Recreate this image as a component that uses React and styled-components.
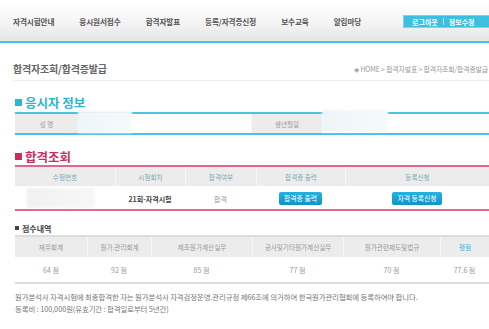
import React from "react"
import styled, { createGlobalStyle } from "styled-components"

const GlobalStyle = createGlobalStyle`
  html, body {
    margin: 0;
    padding: 0;
    background: #fff;
    overflow: hidden;
  }
  body {
    font-family: "Noto Sans CJK KR", "Noto Sans", sans-serif;
    color: #666;
  }
`

const Page = styled("div")`
  width: 489px;
  height: 329px;
  overflow: hidden;
`

const Header = styled("header")`
  display: flex;
  align-items: center;
  height: 41px;
  padding-left: 13px;
  background: linear-gradient(#ffffff 0%, #f7f7f7 45%, #e6e6e6 100%);
  border-bottom: 2px solid #3fc3e3;
`

const Nav = styled("nav")`
  display: flex;
  gap: 25px;
  padding-top: 2px;
`

const NavItem = styled("a")`
  font-size: 7.6px;
  font-weight: 700;
  color: #555;
  white-space: nowrap;
  letter-spacing: -0.1px;
`

const AccountBtn = styled("div")`
  display: flex;
  align-items: center;
  gap: 5px;
  margin-left: auto;
  margin-top: 2px;
  width: 86px;
  height: 13px;
  padding-left: 8px;
  box-sizing: border-box;
  background: #3dbfe0;
  border: 1px solid #7ad6ee;
  border-right: none;
  font-size: 7px;
  font-weight: 700;
  color: #fff;
  white-space: nowrap;
`

const Sep = styled("span")`
  width: 1px;
  height: 7px;
  background: #a8e4f3;
`

const Content = styled("main")`
  padding-left: 15px;
`

const TitleBar = styled("div")`
  display: flex;
  align-items: center;
  justify-content: space-between;
  margin-left: -2px;
  padding: 19px 1px 4px 0;
  border-bottom: 1px solid #eeeeee;
`

const PageTitle = styled("h2")`
  margin: 0;
  font-size: 10px;
  line-height: 14px;
  font-weight: 700;
  color: #666;
  letter-spacing: -0.2px;
`

const Crumbs = styled("div")`
  font-size: 6.9px;
  color: #999;
  letter-spacing: -0.15px;
`

const SectionTitle = styled("h3")`
  display: flex;
  align-items: center;
  gap: 3px;
  margin: ${(p) => p.$top}px 0 0;
  height: 16px;
  font-size: 12.5px;
  font-weight: 700;
  color: ${(p) => p.$color};
  &::before {
    content: "";
    width: 7px;
    height: 7px;
    background: ${(p) => p.$color};
  }
`

const SmallTitle = styled("h4")`
  display: flex;
  align-items: center;
  gap: 3px;
  margin: 12px 0 0;
  height: 10px;
  font-size: 8px;
  font-weight: 700;
  color: #444;
  &::before {
    content: "";
    width: 4px;
    height: 4px;
    background: #444;
  }
`

const Table = styled("div")`
  display: grid;
  grid-template-columns: ${(p) => p.$cols};
  margin-top: ${(p) => p.$top || 2}px;
  border-top: 2px solid ${(p) => p.$line};
  border-bottom: 2px solid ${(p) => p.$line};
`

const Head = styled("div")`
  display: flex;
  align-items: center;
  justify-content: center;
  height: ${(p) => p.$h || 19}px;
  background: #ececec;
  border-left: 1px solid #f6f6f6;
  margin-bottom: ${(p) => p.$gap || 0}px;
  font-size: 6.6px;
  color: ${(p) => (p.$accent ? "#37b4d6" : p.$tint ? "#7fa9b7" : "#999")};
  &:first-child {
    border-left: none;
  }
`

const Cell = styled("div")`
  display: flex;
  align-items: center;
  justify-content: center;
  height: ${(p) => p.$h || 21}px;
  font-size: 7px;
  color: ${(p) => (p.$dark ? "#444" : "#999")};
  font-weight: ${(p) => (p.$dark ? 700 : 400)};
`

const Redacted = styled("div")`
  width: ${(p) => p.$w}px;
  height: ${(p) => p.$h}px;
  margin-top: ${(p) => p.$mt || 0}px;
  margin-left: ${(p) => p.$ml || 0}px;
  background: ${(p) => p.$bg};
  filter: blur(1px);
`

const RedactedCell = styled("div")`
  display: flex;
  align-items: flex-start;
`

const ActionBtn = styled("button")`
  height: 13px;
  padding: 0 5px;
  border: none;
  border-radius: 2px;
  background: linear-gradient(#26b3e0, #0f93c9);
  color: #fff;
  font-family: inherit;
  font-size: 6.8px;
  line-height: 13px;
  white-space: nowrap;
`

const Note = styled("p")`
  margin: 7px 0 0;
  font-size: 7.4px;
  line-height: 12px;
  color: #777;
  letter-spacing: -0.1px;
  white-space: nowrap;
`

const menu = ["자격시험안내", "응시원서접수", "합격자발표", "등록/자격증신청", "보수교육", "알림마당"]

const scores = [
  { name: "재무회계", value: "64 점" },
  { name: "원가.관리회계", value: "92 점" },
  { name: "제조원가계산실무", value: "85 점" },
  { name: "공사및기타원가계산실무", value: "77 점" },
  { name: "원가관련제도및법규", value: "70 점" },
  { name: "평점", value: "77.6 점", accent: true },
]

const App = () => {
  return (
    <Page>
      <GlobalStyle />
      <Header>
        <Nav>
          {menu.map((m) => (
            <NavItem key={m}>{m}</NavItem>
          ))}
        </Nav>
        <AccountBtn>
          <span>로그아웃</span>
          <Sep />
          <span>정보수정</span>
        </AccountBtn>
      </Header>

      <Content>
        <TitleBar>
          <PageTitle>합격자조회/합격증발급</PageTitle>
          <Crumbs>◈ HOME &gt; 합격자발표 &gt; 합격자조회/합격증발급</Crumbs>
        </TitleBar>

        <SectionTitle $color="#2bb5d8" $top={13}>응시자 정보</SectionTitle>
        <Table $cols="63px 173px 71px 1fr" $line="#48c4e2">
          <Head>성 명</Head>
          <RedactedCell>
            <Redacted $w={54} $h={22} $mt={-3} $bg="linear-gradient(90deg,#eef5f8,#f6fafb)" />
          </RedactedCell>
          <Head>생년월일</Head>
          <RedactedCell>
            <Redacted $w={66} $h={22} $mt={-4} $bg="linear-gradient(90deg,#eef5f8,#f6fafb)" />
          </RedactedCell>
        </Table>

        <SectionTitle $color="#d12a5d" $top={13}>합격조회</SectionTitle>
        <Table $cols="100px 70px 71px 89px 1fr" $line="#e0668d" $top={1}>
          <Head $tint $gap={2}>수험번호</Head>
          <Head $tint $gap={2}>시험회차</Head>
          <Head $tint $gap={2}>합격여부</Head>
          <Head $tint $gap={2}>합격증 출력</Head>
          <Head $tint $gap={2}>등록신청</Head>
          <RedactedCell>
            <Redacted $w={68} $h={20} $ml={12} $bg="linear-gradient(90deg,#f1f1f1,#f7f7f7)" />
          </RedactedCell>
          <Cell $dark>21회-자격시험</Cell>
          <Cell>합격</Cell>
          <Cell><ActionBtn>합격증 출력</ActionBtn></Cell>
          <Cell><ActionBtn>자격 등록신청</ActionBtn></Cell>
        </Table>

        <SmallTitle>점수내역</SmallTitle>
        <Table $cols="72px 64px 101px 91px 97px 1fr" $line="#dddddd" $top={2}>
          {scores.map((s) => (
            <Head key={s.name} $h={20} $accent={s.accent}>{s.name}</Head>
          ))}
          {scores.map((s) => (
            <Cell key={s.name} $h={25}>{s.value}</Cell>
          ))}
        </Table>

        <Note>
          원가분석사 자격시험에 최종합격한 자는 원가분석사 자격검정운영.관리규정 제66조에 의거하여 한국원가관리협회에 등록하여야 합니다.
          <br />
          등록비 : 100,000원(유효기간 : 합격일로부터 5년간)
        </Note>
      </Content>
    </Page>
  )
}

export default App
